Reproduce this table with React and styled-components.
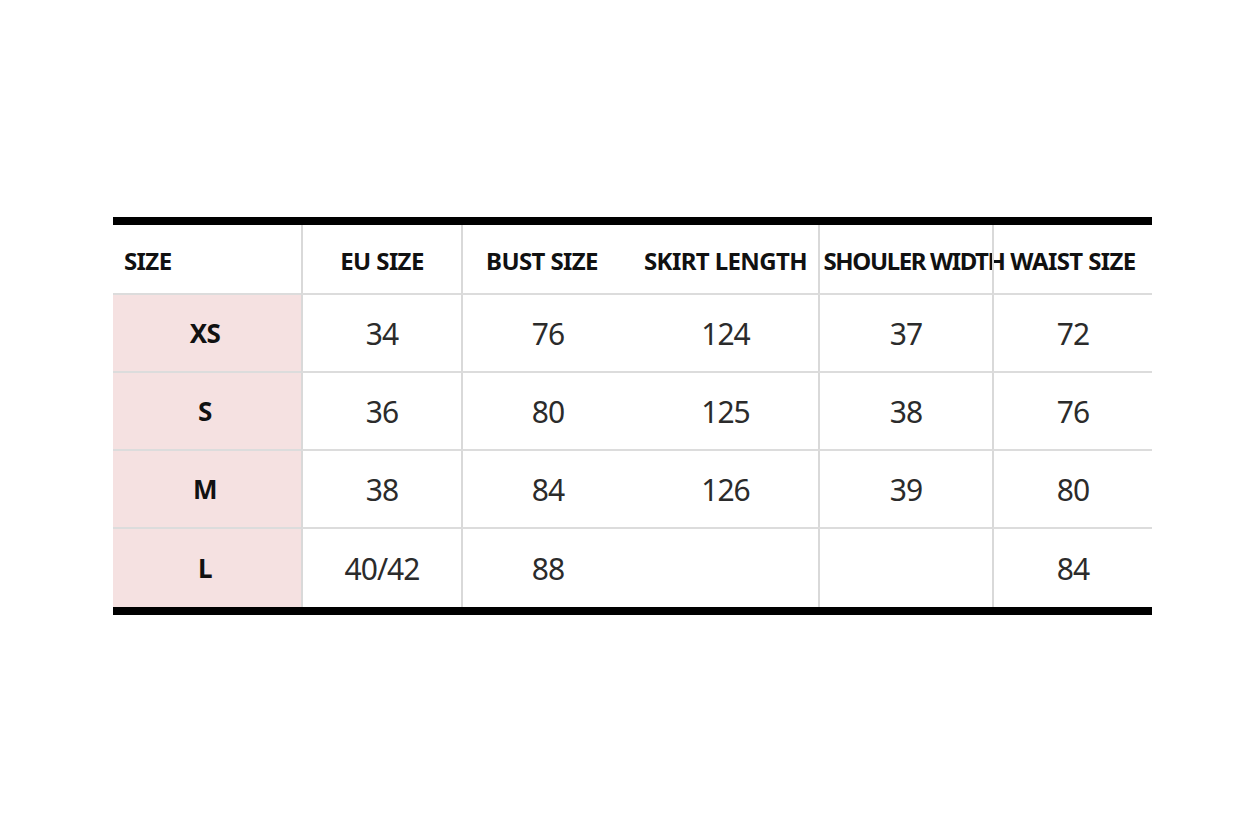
import React from 'react';
import styled, {createGlobalStyle} from 'styled-components';

const GlobalStyle = createGlobalStyle`
  html, body {
    margin: 0;
    padding: 0;
    background: #ffffff;
  }
  body {
    font-family: "Noto Sans", "Open Sans", sans-serif;
  }
`;

const COLUMNS = [
  {key: 'size', label: 'SIZE', width: 188, headAlign: 'left'},
  {key: 'eu', label: 'EU SIZE', width: 160, divider: true},
  {key: 'bust', label: 'BUST SIZE', width: 172, divider: true, headAlign: 'nudge'},
  {key: 'skirt', label: 'SKIRT LENGTH', width: 185},
  {key: 'shoulder', label: 'SHOULER WIDTH', width: 174, divider: true, headAlign: 'overflow'},
  {key: 'waist', label: 'WAIST SIZE', width: 160, divider: true},
];

const ROWS = [
  {size: 'XS', eu: '34', bust: '76', skirt: '124', shoulder: '37', waist: '72'},
  {size: 'S', eu: '36', bust: '80', skirt: '125', shoulder: '38', waist: '76'},
  {size: 'M', eu: '38', bust: '84', skirt: '126', shoulder: '39', waist: '80'},
  {size: 'L', eu: '40/42', bust: '88', skirt: '', shoulder: '', waist: '84'},
];

const Page = styled.div`
  min-height: 832px;
  padding: 217px 0 0 113px;
  box-sizing: border-box;
`;

const Table = styled.div`
  display: grid;
  grid-template-columns: ${props => props.cols.map(c => c.width + 'px').join(' ')};
  width: ${props => props.cols.reduce((s, c) => s + c.width, 0)}px;
  border-top: 8px solid #000;
  border-bottom: 8px solid #000;
`;

const Cell = styled.div`
  display: flex;
  align-items: center;
  justify-content: center;
  box-sizing: border-box;
  height: ${props => props.head ? 70 : 78}px;
  border-left: ${props => props.divider ? '2px solid #d9d9d9' : 'none'};
  border-bottom: ${props => props.last ? 'none' : '2px solid #dcdcdc'};
  background: ${props => props.pink ? '#f5e1e1' : 'transparent'};
  white-space: nowrap;
`;

const HeadText = styled.span`
  font-family: "Noto Sans", sans-serif;
  font-weight: 700;
  font-size: 24px;
  letter-spacing: -0.6px;
  color: #111;
  margin-top: 2px;
  ${props => props.align === 'left' && `
    margin-right: auto;
    padding-left: 11px;
  `}
  ${props => props.align === 'nudge' && `
    margin-left: -12px;
  `}
  ${props => props.align === 'overflow' && `
    margin-left: 16px;
    letter-spacing: -1.4px;
  `}
`;

const SizeLabel = styled.span`
  font-family: "Noto Sans", sans-serif;
  font-weight: 700;
  font-size: 26px;
  letter-spacing: -0.5px;
  color: #111;
  margin-left: -4px;
`;

const Value = styled.span`
  font-family: "Noto Sans", sans-serif;
  font-weight: 400;
  font-size: 30px;
  letter-spacing: -1px;
  color: #2b2b2b;
`;

export default function App() {
  return (
    <Page>
      <GlobalStyle />
      <Table cols={COLUMNS}>
        {COLUMNS.map(col => (
          <Cell key={'h-' + col.key} head divider={col.divider}>
            <HeadText align={col.headAlign}>{col.label}</HeadText>
          </Cell>
        ))}
        {ROWS.map((row, i) =>
          COLUMNS.map(col => (
            <Cell
              key={row.size + '-' + col.key}
              divider={col.divider}
              pink={col.key === 'size'}
              last={i === ROWS.length - 1}
            >
              {col.key === 'size'
                ? <SizeLabel>{row.size}</SizeLabel>
                : <Value>{row[col.key]}</Value>}
            </Cell>
          ))
        )}
      </Table>
    </Page>
  );
}
